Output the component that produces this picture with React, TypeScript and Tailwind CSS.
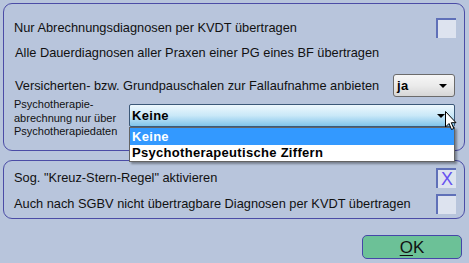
import React from "react";

const Checkbox = ({ checked }: { checked?: boolean }) => (
  <div className="w-[20px] h-[20px] bg-[#dde3ef] border-l-2 border-t-2 border-l-[#5f70b8] border-t-[#5f70b8] flex items-center justify-center shrink-0">
    {checked && (
      <span className="text-[#6652f0] text-[18px] leading-none" style={{ fontFamily: '"Liberation Sans", Arial, sans-serif' }}>
        X
      </span>
    )}
  </div>
);

const Arrow = () => (
  <svg width="8" height="4" viewBox="0 0 8 4" className="shrink-0">
    <polygon points="0,0 8,0 4,4" fill="#000" />
  </svg>
);

export default function App() {
  return (
    <div
      className="w-[469px] h-[263px] bg-[#b8c5dc] text-[#111] pt-[3px] pl-[3px] pr-[4px] overflow-hidden"
      style={{ fontFamily: '"Liberation Sans", Arial, sans-serif' }}
    >
      {/* Panel 1 */}
      <div className="relative h-[148px] border border-[#4b4ca6] rounded-[9px] pl-[10px] pr-[8px]">
        <div className="flex items-center justify-between h-[20px] mt-[14px]">
          <span className="text-[12.8px]">Nur Abrechnungsdiagnosen per KVDT übertragen</span>
          <Checkbox />
        </div>
        <div className="flex items-center h-[20px] mt-[5px]">
          <span className="text-[12.8px] pl-[1px]">Alle Dauerdiagnosen aller Praxen einer PG eines BF übertragen</span>
        </div>
        <div className="flex items-center justify-between h-[23px] mt-[11px]">
          <span className="text-[12.8px] pl-[1px]">Versicherten- bzw. Grundpauschalen zur Fallaufnahme anbieten</span>
          <div className="w-[62px] h-[23px] mr-[1px] border border-[#6b6b6b] rounded-[3px] bg-gradient-to-b from-[#f6f6f6] via-[#ebebeb] to-[#d6d6d6] flex items-center justify-between pl-[3px] pr-[7px]">
            <span className="text-[13px] font-bold text-black tracking-[0.3px]">ja</span>
            <Arrow />
          </div>
        </div>
        <div className="flex items-start justify-between">
          <div className="text-[11px] leading-[13.5px] mt-[1px]">
            Psychotherapie-
            <br />
            abrechnung nur über
            <br />
            Psychotherapiedaten
          </div>
          <div className="relative w-[326px] mt-[7px] mr-[1px]">
            <div className="h-[23px] border border-[#3b5878] rounded-[2px] bg-gradient-to-b from-[#eef8fd] via-[#c9e8f8] to-[#80c4ea] flex items-center justify-between pl-[2px] pr-[9px]">
              <span className="text-[13px] font-bold text-black tracking-[0.3px]">Keine</span>
              <Arrow />
            </div>
            {/* dropdown list */}
            <div className="absolute left-0 top-[23px] w-[326px] bg-white border border-[#646464] shadow-[2px_2px_2px_rgba(0,0,0,0.35)] z-10">
              <div className="h-[17px] bg-[#3399ff] text-white text-[13px] font-bold leading-[17px] pl-[2px] tracking-[0.3px]">Keine</div>
              <div className="h-[16px] text-black text-[13px] font-bold leading-[16px] pl-[2px] tracking-[0.3px]">Psychotherapeutische Ziffern</div>
            </div>
            {/* mouse cursor */}
            <svg
              className="absolute z-20"
              style={{ left: 316, top: 7 }}
              width="13"
              height="20"
              viewBox="0 0 13 20"
            >
              <path
                d="M0.5,0.5 L0.5,16 L4,12.5 L6.5,18.5 L8.8,17.5 L6.3,11.7 L11,11.7 Z"
                fill="#fff"
                stroke="#000"
                strokeWidth="1"
                strokeLinejoin="miter"
              />
            </svg>
          </div>
        </div>
      </div>

      {/* Panel 2 */}
      <div className="h-[59px] mt-[9px] border border-[#4b4ca6] rounded-[9px] pl-[10px] pr-[8px]">
        <div className="flex items-center justify-between h-[20px] mt-[7px]">
          <span className="text-[12.8px]">Sog. "Kreuz-Stern-Regel" aktivieren</span>
          <Checkbox checked />
        </div>
        <div className="flex items-center justify-between h-[20px] mt-[6px]">
          <span className="text-[12.8px]">Auch nach SGBV nicht übertragbare Diagnosen per KVDT übertragen</span>
          <Checkbox />
        </div>
      </div>

      <div className="flex justify-end mt-[16px] pr-[3px]">
        <button className="w-[100px] h-[24px] bg-[#6cc197] border border-[#4546a8] rounded-[5px] text-[17px] leading-none text-[#111] flex items-center justify-center">
          <span>
            <span className="underline underline-offset-2">O</span>K
          </span>
        </button>
      </div>
    </div>
  );
}
